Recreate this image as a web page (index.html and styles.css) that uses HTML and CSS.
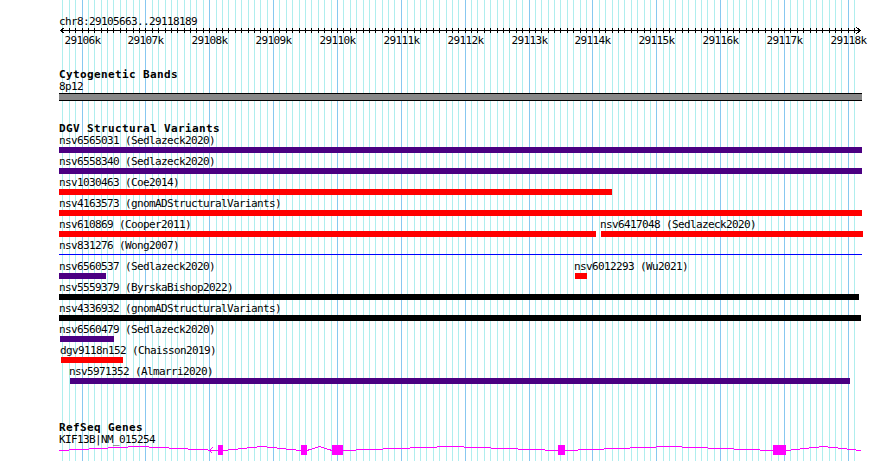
FILE: index.html
```html
<!DOCTYPE html>
<html lang="en">
<head>
    <meta charset="UTF-8">
    <meta name="viewport" content="width=device-width, initial-scale=1.0">
    <title>chr8:29105663..29118189</title>
    <link rel="stylesheet" href="styles.css">
</head>
<body>
    <div id="browser">
        <svg id="grid" width="890" height="461"></svg>
        <div class="tracks">
            <div class="overview">
                <div class="segment">chr8:29105663..29118189</div>
                <svg id="ruler" width="803" height="8"></svg>
                <div id="ticks" class="ticks"></div>
            </div>

            <div class="track bands">
                <div class="track-title">Cytogenetic Bands</div>
                <div class="label">8p12</div>
                <div class="band"></div>
            </div>

            <div class="track dgv">
                <div class="track-title">DGV Structural Variants</div>
                <div class="rows">
                    <div class="row">
                        <div class="feature" style="left:0"><div class="label">nsv6565031 (Sedlazeck2020)</div><div class="bar indigo" style="width:803px"></div></div>
                    </div>
                    <div class="row">
                        <div class="feature" style="left:0"><div class="label">nsv6558340 (Sedlazeck2020)</div><div class="bar indigo" style="width:803px"></div></div>
                    </div>
                    <div class="row">
                        <div class="feature" style="left:0"><div class="label">nsv1030463 (Coe2014)</div><div class="bar red" style="width:553px"></div></div>
                    </div>
                    <div class="row">
                        <div class="feature" style="left:0"><div class="label">nsv4163573 (gnomADStructuralVariants)</div><div class="bar red" style="width:803px"></div></div>
                    </div>
                    <div class="row">
                        <div class="feature" style="left:0"><div class="label">nsv610869 (Cooper2011)</div><div class="bar red" style="width:537px"></div></div>
                        <div class="feature" style="left:541px"><div class="label">nsv6417048 (Sedlazeck2020)</div><div class="bar red" style="width:262px;margin-left:1px"></div></div>
                    </div>
                    <div class="row">
                        <div class="feature" style="left:0"><div class="label">nsv831276 (Wong2007)</div><div class="bar line" style="width:803px"></div></div>
                    </div>
                    <div class="row">
                        <div class="feature" style="left:0"><div class="label">nsv6560537 (Sedlazeck2020)</div><div class="bar indigo" style="width:47px"></div></div>
                        <div class="feature" style="left:515px"><div class="label">nsv6012293 (Wu2021)</div><div class="bar red" style="width:12px;margin-left:1px"></div></div>
                    </div>
                    <div class="row">
                        <div class="feature" style="left:0"><div class="label">nsv5559379 (ByrskaBishop2022)</div><div class="bar black" style="width:800px"></div></div>
                    </div>
                    <div class="row">
                        <div class="feature" style="left:0"><div class="label">nsv4336932 (gnomADStructuralVariants)</div><div class="bar black" style="width:802px"></div></div>
                    </div>
                    <div class="row">
                        <div class="feature" style="left:0"><div class="label">nsv6560479 (Sedlazeck2020)</div><div class="bar indigo" style="width:54px;margin-left:1px"></div></div>
                    </div>
                    <div class="row">
                        <div class="feature" style="left:1px"><div class="label">dgv9118n152 (Chaisson2019)</div><div class="bar red" style="width:62px;margin-left:1px"></div></div>
                    </div>
                    <div class="row">
                        <div class="feature" style="left:10px"><div class="label">nsv5971352 (Almarri2020)</div><div class="bar indigo" style="width:780px;margin-left:1px"></div></div>
                    </div>
                </div>
            </div>

            <div class="track genes">
                <div class="track-title">RefSeq Genes</div>
                <div class="label">KIF13B|NM_015254</div>
                <svg class="gene" width="803" height="11" shape-rendering="crispEdges">
                    <g class="introns">
                        <polyline points="0,5.5 79.5,1.5 159,5.5"/>
                        <polyline points="164,5.5 203,1.5 242,5.5"/>
                        <polyline points="248,5.5 260.5,1.5 273,5.5"/>
                        <polyline points="284,5.5 391.5,1.5 499,5.5"/>
                        <polyline points="506,5.5 610,1.5 714,5.5"/>
                        <polyline points="727,5.5 764.5,1.5 802,5.5"/>
                        <polyline points="153.5,2.5 150.5,5.5 153.5,8.5"/>
                    </g>
                    <g class="exons">
                        <rect x="159" y="0" width="5" height="10"/>
                        <rect x="242" y="0" width="6" height="10"/>
                        <rect x="273" y="0" width="11" height="10"/>
                        <rect x="499" y="0" width="7" height="10"/>
                        <rect x="714" y="0" width="13" height="10"/>
                    </g>
                </svg>
            </div>
        </div>
    </div>

    <script src="app.js"></script>
</body>
</html>
```

FILE: styles.css
```css
body { margin: 0; background: #fff; color: #000; font-family: "DejaVu Sans Mono", monospace; }
#browser { position: relative; width: 890px; height: 461px; overflow: hidden; }
#grid { position: absolute; left: 0; top: 0; }
#grid line { stroke: #afeeee; }
#grid line.major { stroke: #87c8f0; }

.tracks { position: relative; padding-left: 59px; }
.label, .segment, .ticks span { font-size: 11px; line-height: 11px; letter-spacing: -0.62px; white-space: nowrap; }
.track-title { font-size: 11px; line-height: 11px; font-weight: bold; letter-spacing: 0.38px; white-space: nowrap; }

.overview { padding-top: 16px; }
#ruler { display: block; }
#ruler line, #ruler polyline { stroke: #000; fill: none; }
.ticks { position: relative; height: 11px; }
.ticks span { position: absolute; top: 0; transform: translateX(-50%); }

.bands { margin-top: 23px; }
.bands .label { margin-top: 1px; }
.band { margin-top: 1px; width: 803px; height: 8px; box-sizing: border-box; background: #888; border-top: 1px solid #000; border-bottom: 1px solid #000; }

.dgv { margin-top: 22px; }
.rows { margin-top: 1px; }
.row { position: relative; height: 21px; }
.feature { position: absolute; top: 0; }
.bar { margin-top: 1px; height: 6px; }
.bar.indigo { background: #4b0082; }
.bar.red { background: #f00; }
.bar.black { background: #000; }
.bar.line { margin-top: 3px; height: 1px; background: #00f; }

.genes { margin-top: 35px; }
.genes .label { margin-top: 1px; }
.gene { display: block; }
.gene polyline { fill: none; stroke: #f0f; }
.gene rect { fill: #f0f; }
```

FILE: app.js
```js
const START = 29105663;
const END = 29118189;
const PANEL_LEFT = 59;
const SCALE = 800 / (END - START + 1);

function px(bp) {
    return Math.floor(60.5 + (bp - START) * SCALE);
}

const SVG = "http://www.w3.org/2000/svg";

function line(parent, x1, y1, x2, y2, cls) {
    const l = document.createElementNS(SVG, "line");
    l.setAttribute("x1", x1);
    l.setAttribute("y1", y1);
    l.setAttribute("x2", x2);
    l.setAttribute("y2", y2);
    if (cls) l.setAttribute("class", cls);
    parent.appendChild(l);
}

const grid = document.getElementById("grid");
const ruler = document.getElementById("ruler");
const ticks = document.getElementById("ticks");

ruler.setAttribute("shape-rendering", "crispEdges");
line(ruler, 1, 3.5, 802, 3.5);
["5.5,0.5 1.5,3.5 5.5,6.5", "797.5,0.5 801.5,3.5 797.5,6.5"].forEach(pts => {
    const p = document.createElementNS(SVG, "polyline");
    p.setAttribute("points", pts);
    ruler.appendChild(p);
});

for (let bp = Math.ceil(START / 100) * 100; bp <= END; bp += 100) {
    const x = px(bp);
    const major = bp % 1000 === 0;
    line(grid, x + 0.5, 0, x + 0.5, 461, major ? "major" : "");
    line(ruler, x - PANEL_LEFT + 0.5, 1, x - PANEL_LEFT + 0.5, 6);
    if (major) {
        const label = document.createElement("span");
        label.textContent = (bp / 1000) + "k";
        label.style.left = (x - PANEL_LEFT + 0.5) + "px";
        ticks.appendChild(label);
    }
}
```
